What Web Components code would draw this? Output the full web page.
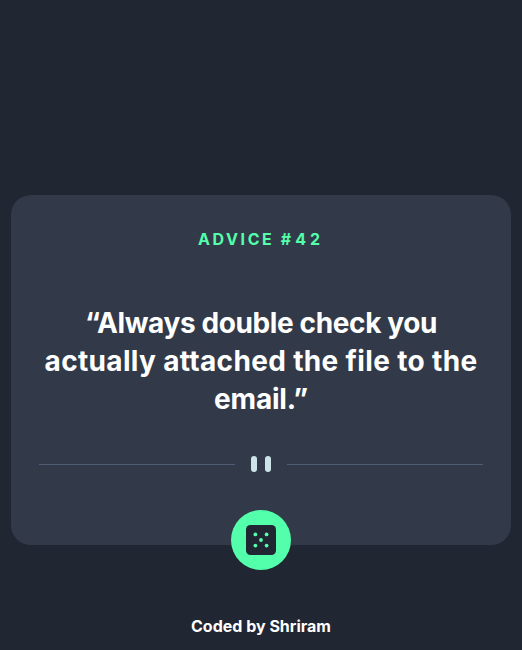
<!DOCTYPE html>
<html lang="en"><head><meta charset="utf-8"><title>Advice generator</title>
<style>html,body{margin:0;height:100%;background:#202632}</style></head>
<body><advice-app></advice-app>
<script>
const define=(name,html)=>{const t=document.createElement('template');t.innerHTML=html;
customElements.define(name,class extends HTMLElement{constructor(){super();this.attachShadow({mode:'open'}).append(t.content.cloneNode(true));}});};
define('pattern-divider',`<style>:host{display:block}svg{display:block}</style>
<svg width="444" height="16" viewBox="0 0 444 16"><path fill="#4f5d74" d="M0 8h196v1H0zM248 8h196v1H248z"/><g fill="#cee3e9"><rect x="212" width="6" height="16" rx="3"/><rect x="226" width="6" height="16" rx="3"/></g></svg>`);
define('dice-button',`<style>:host{display:block}button{width:60px;height:60px;border:0;border-radius:50%;background:#53ffaa;padding:0;display:grid;place-items:center}svg{display:block}</style>
<button aria-label="New advice"><svg width="30" height="30" viewBox="0 0 30 30"><rect width="30" height="30" rx="4.5" fill="#202733"/><g fill="#53ffaa"><circle cx="9.4" cy="9.4" r="1.9"/><circle cx="20.6" cy="9.4" r="1.9"/><circle cx="15" cy="15" r="1.9"/><circle cx="9.4" cy="20.6" r="1.9"/><circle cx="20.6" cy="20.6" r="1.9"/></g></svg></button>`);
define('advice-card',`<style>:host{display:flex;flex-direction:column;align-items:center;box-sizing:border-box;width:500px;height:350px;background:#323a49;border-radius:20px;text-align:center}
h1{margin:33px 0 0;font-size:16px;line-height:22px;letter-spacing:2.6px;color:#53ffaa;font-weight:700}
.quote{margin:54px 0 0;color:#fff;font-size:28px;line-height:38px;font-weight:650}
pattern-divider{margin-top:38px}dice-button{margin-top:38px}</style>
<h1><slot name="title"></slot></h1><div class="quote"><slot></slot></div><pattern-divider></pattern-divider><dice-button></dice-button>`);
define('quote-line',`<style>:host{display:block;white-space:nowrap;letter-spacing:var(--ls,0)}</style><slot></slot>`);
define('advice-app',`<style>:host{display:flex;flex-direction:column;align-items:center;box-sizing:border-box;height:650px;padding-top:195px;font-family:Inter,"Open Sans",sans-serif}.number{letter-spacing:4px}.pair{letter-spacing:-.8px}footer{margin-top:70px;color:#fff;font-size:16px;line-height:22px;font-weight:650}</style>
<advice-card><span slot="title">ADVICE <span class="number">#42</span></span><quote-line style="--ls:-.38px">“Always double check you</quote-line><quote-line style="--ls:.34px">actually a<span class="pair">t</span>tached the file to the</quote-line><quote-line style="--ls:-.2px">email.”</quote-line></advice-card><footer>Coded by Shriram</footer>`);
</script></body></html>
